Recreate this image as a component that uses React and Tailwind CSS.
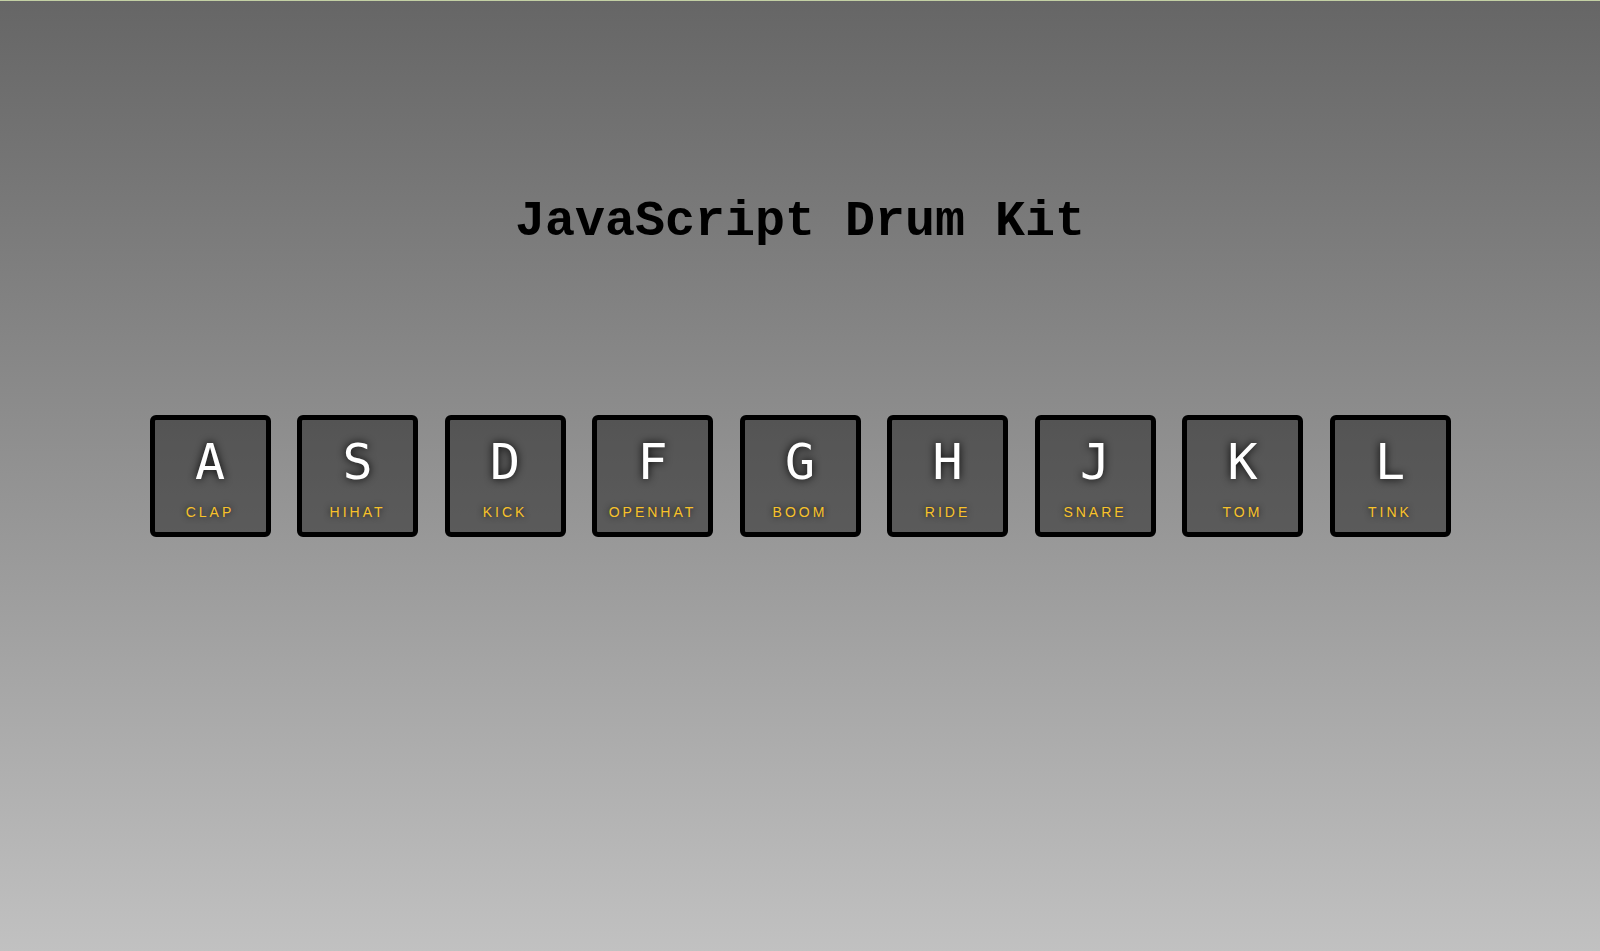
const keys = [
  { key: 'A', sound: 'clap' },
  { key: 'S', sound: 'hihat' },
  { key: 'D', sound: 'kick' },
  { key: 'F', sound: 'openhat' },
  { key: 'G', sound: 'boom' },
  { key: 'H', sound: 'ride' },
  { key: 'J', sound: 'snare' },
  { key: 'K', sound: 'tom' },
  { key: 'L', sound: 'tink' },
];

function Key({ letter, sound }) {
  return (
    <div className="box-border flex h-[122px] w-[121px] flex-col items-center rounded-[6px] border-[5px] border-black bg-black/40 pt-[17px] text-center">
      <kbd className="block font-['DejaVu_Sans_Mono',monospace] text-[50px] leading-[50px] text-white [text-shadow:0_0_8px_black]">
        {letter}
      </kbd>
      <span className="mt-[17px] block font-['Liberation_Sans',Arial,sans-serif] text-[14px] uppercase leading-[16px] tracking-[3px] text-[#f8c22a] [text-shadow:0_0_6px_rgba(0,0,0,0.8)]">
        {sound}
      </span>
    </div>
  );
}

export default function App() {
  return (
    <div className="min-h-screen border-t border-[#c3d0a4] bg-gradient-to-b from-[#666666] to-[#c1c1c1]">
      <h1 className="pt-[196px] text-center font-['Liberation_Mono','Courier_New',monospace] text-[50px] font-bold leading-[50px] text-black">
        JavaScript Drum Kit
      </h1>
      <div className="mt-[168px] flex justify-center gap-[26.5px]">
        {keys.map((k) => (
          <Key key={k.key} letter={k.key} sound={k.sound} />
        ))}
      </div>
    </div>
  );
}
